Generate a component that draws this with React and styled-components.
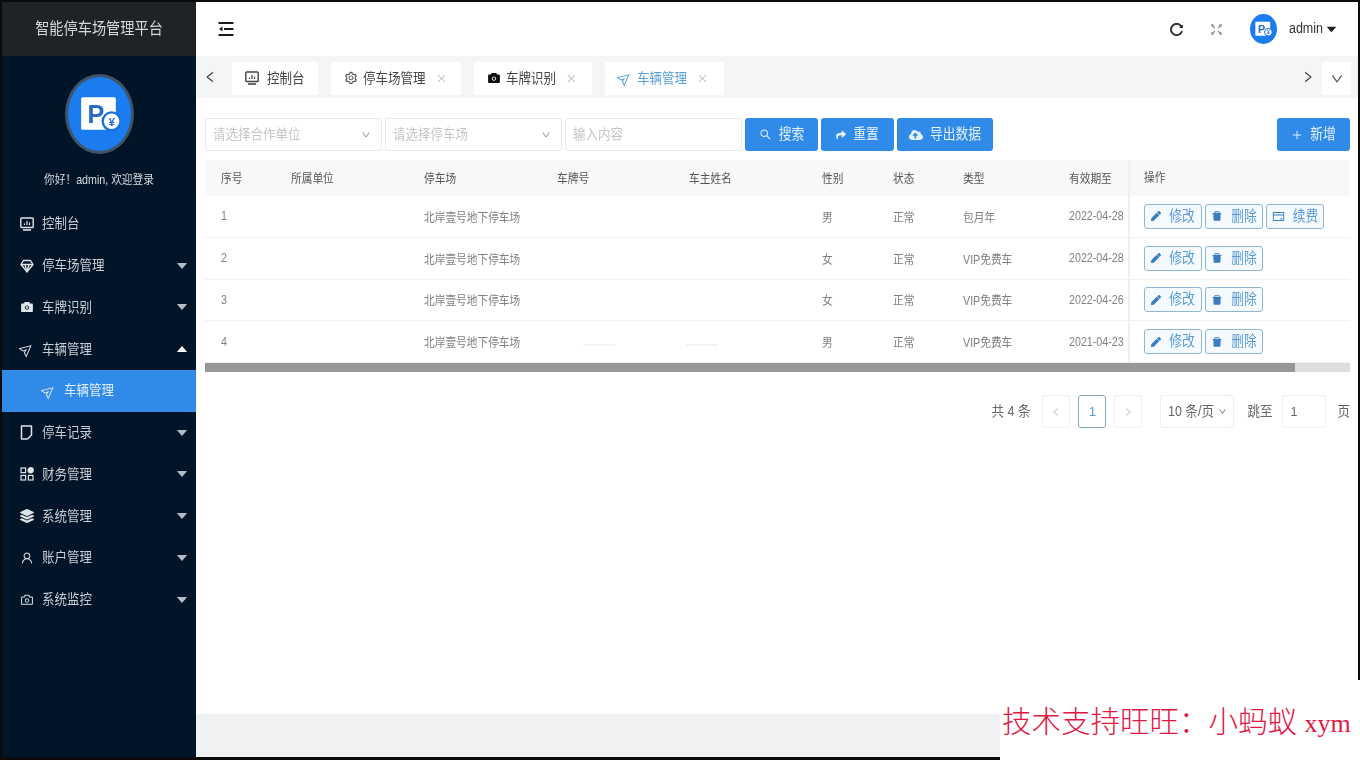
import React from 'react';
import styled, { createGlobalStyle, css } from 'styled-components';
import {
  AiOutlineSetting,
  AiFillCamera,
  AiOutlineSend,
  AiOutlineSearch,
  AiOutlinePlus,
  AiOutlineClose,
  AiOutlineLeft,
  AiOutlineRight,
  AiOutlineDown,
  AiOutlineReload,
  AiOutlineFullscreen,
  AiOutlineUser,
  AiOutlineCamera,
  AiOutlineCreditCard,
  AiFillDelete,
  AiFillCaretDown,
  AiFillCaretUp,
} from 'react-icons/ai';
import { FaShare, FaLayerGroup, FaPen, FaCloudUploadAlt } from 'react-icons/fa';

const FONT = `'Liberation Sans', 'Noto Sans CJK SC', sans-serif`;

// the screenshot is a stretched capture, glyphs are taller than they are wide
const tall = css`
  display: inline-block;
  transform: scaleY(1.12);
`;

const GlobalStyle = createGlobalStyle`
  html, body { margin: 0; padding: 0; background: #fff; }
  body { font-family: ${FONT}; overflow: hidden; }
  * { box-sizing: border-box; }
`;

const Page = styled.div`
  position: relative;
  width: 1360px;
  height: 760px;
  padding: 2px 2px 3px 2px;
  background: #0a0a0a;
  display: flex;
  overflow: hidden;
`;

const Label = styled.span`
  display: inline-block;
  transform: translateY(-1.5px) scaleY(1.12);
`;

/* sidebar */
const Sidebar = styled.aside`
  width: 194px;
  flex-shrink: 0;
  background: #021428;
  display: flex;
  flex-direction: column;
  filter: blur(0.35px);
`;

const Brand = styled.div`
  height: 54px;
  background: #1f2226;
  color: #d9d9d9;
  font-size: 14.2px;
  display: flex;
  align-items: center;
  justify-content: center;
`;

const Profile = styled.div`
  height: 147px;
  padding-top: 18px;
  display: flex;
  flex-direction: column;
  align-items: center;
`;

const AvatarRing = styled.div`
  width: 69px;
  height: 80px;
  display: flex;
  align-items: center;
  justify-content: center;
  border-radius: 50%;
  background: #1b7cf0;
  border: 3px solid #3f5468;
`;

const Welcome = styled.div`
  ${tall}
  margin-top: 17px;
  font-size: 10.7px;
  color: #d6dade;
`;

const MenuRow = styled.div`
  height: 41.75px;
  display: flex;
  align-items: center;
  padding: 0 7px 0 ${({ $sub }) => ($sub ? '39px' : '17px')};
  gap: 8px;
  font-size: 12.5px;
  color: ${({ $active }) => ($active ? '#dfeeff' : '#c9ced4')};
  background: ${({ $active }) => ($active ? '#2f8ae8' : 'transparent')};
`;

const MenuIcon = styled.span`
  width: 15px;
  display: flex;
  align-items: center;
  justify-content: center;
  font-size: 14px;
  color: #dfe3e7;
`;

const MenuLabel = styled(Label)`
  flex: 1;
`;

const Caret = styled.span`
  display: flex;
  font-size: 14px;
  color: ${({ $open }) => ($open ? '#fff' : '#b4bcc6')};
`;

const PlaneIcon = styled(AiOutlineSend)`
  transform: rotate(-40deg);
`;

/* main column */
const Main = styled.main`
  flex: 1;
  min-width: 0;
  background: #fff;
  display: flex;
  flex-direction: column;
  filter: blur(0.35px);
`;

const TopBar = styled.header`
  height: 54px;
  display: flex;
  align-items: center;
  padding: 0 20px 0 22px;
`;

const TopRight = styled.div`
  margin-left: auto;
  display: flex;
  align-items: center;
`;

const ReloadIcon = styled(AiOutlineReload)`
  font-size: 15px;
  color: #1a1a1a;
  stroke: #1a1a1a;
  stroke-width: 50;
`;

const ExpandIcon = styled(AiOutlineFullscreen)`
  font-size: 15px;
  color: #777;
  margin-left: 25px;
`;

const UserCircle = styled.div`
  width: 27px;
  height: 30px;
  margin-left: 26px;
  border-radius: 50%;
  background: #1b7cf0;
  display: flex;
  align-items: center;
  justify-content: center;
`;

const UserName = styled.span`
  ${tall}
  margin-left: 12px;
  font-size: 12.5px;
  color: #333;
`;

const UserCaret = styled(AiFillCaretDown)`
  font-size: 13px;
  color: #222;
  margin-left: 2px;
`;

const TabBar = styled.div`
  height: 42px;
  background: #f4f5f7;
  display: flex;
  align-items: flex-start;
  padding: 6px 0 0 0;
`;

const TabArrow = styled.span`
  width: ${({ $w }) => $w};
  height: 30px;
  padding-right: ${({ $pr }) => $pr || '0'};
  display: flex;
  align-items: center;
  justify-content: center;
  font-size: 14px;
  color: #333;
  flex-shrink: 0;
`;

const Tab = styled.div`
  height: 33px;
  width: ${({ $w }) => $w};
  margin-right: 13px;
  background: #fff;
  display: flex;
  align-items: center;
  padding: 0 0 1px 13px;
  font-size: 12.5px;
  gap: ${({ $gap }) => $gap || '5px'};
  color: ${({ $active }) => ($active ? '#5aa0d8' : '#444')};
  flex-shrink: 0;
`;

const TabIcon = styled.span`
  display: flex;
  font-size: 14px;
  color: ${({ $color }) => $color || 'inherit'};
`;

const TabClose = styled(AiOutlineClose)`
  font-size: 11px;
  color: #b9b9b9;
  margin-left: 5px;
`;

const TabSpacer = styled.div`
  flex: 1;
`;

const TabMenu = styled.div`
  width: 29px;
  height: 33px;
  margin-right: 7px;
  background: #fff;
  display: flex;
  align-items: center;
  justify-content: center;
  font-size: 14px;
  color: #444;
`;

const Content = styled.div`
  flex: 1;
  padding: 20px 8px 0 9px;
`;

const Filters = styled.div`
  height: 33px;
  display: flex;
  align-items: stretch;
`;

const Field = styled.div`
  width: 177px;
  margin-right: 3px;
  border: 1px solid #e8eaed;
  border-radius: 3px;
  display: flex;
  align-items: center;
  justify-content: space-between;
  padding: 0 10px 0 7px;
  font-size: 12.5px;
  color: #c4c6ca;
`;

const FieldArrow = styled(AiOutlineDown)`
  font-size: 10px;
  color: #777;
`;

const Btn = styled.div`
  height: 33px;
  width: ${({ $w }) => $w};
  margin-right: 3px;
  background: #2f8ae8;
  color: #e6f1fc;
  border-radius: 3px;
  display: flex;
  align-items: center;
  justify-content: center;
  gap: 7px;
  font-size: 12.8px;
  flex-shrink: 0;
`;

const AddBtn = styled(Btn)`
  margin-left: auto;
  margin-right: 0;
`;

const COLUMNS = '70px 133px 133px 132px 133px 71px 70px 106px 75px 1fr';

const HeadRow = styled.div`
  margin-top: 9px;
  height: 36px;
  display: grid;
  grid-template-columns: ${COLUMNS};
  align-items: center;
  background: #f7f8fa;
  font-size: 10.7px;
  color: #555;
`;

const Row = styled.div`
  height: 41.75px;
  display: grid;
  grid-template-columns: ${COLUMNS};
  align-items: center;
  border-bottom: 1px solid #f0f1f3;
  font-size: 10.7px;
  color: #808080;
`;

const Cell = styled.div`
  ${tall}
  padding-left: 16px;
  white-space: nowrap;
`;

const HeadCell = styled(Cell)`
  transform: translateY(-1px) scaleY(1.12);
`;

const ActionCell = styled.div`
  height: 100%;
  padding-left: 14px;
  display: flex;
  align-items: center;
  gap: 3px;
  border-left: 2px solid #eef0f2;
`;

const ActionBtn = styled.div`
  height: 25px;
  width: 58px;
  border: 1px solid #8fb6d2;
  border-radius: 3px;
  background: #f5fafe;
  color: #5a9bd5;
  font-size: 12.8px;
  display: flex;
  align-items: center;
  justify-content: center;
  gap: 8px;
`;

const ActionIcon = styled.span`
  display: flex;
  font-size: ${({ $size }) => $size || '12px'};
  color: #3a7cc0;
`;

const Redacted = styled.span`
  display: block;
  width: 32px;
  height: 1px;
  margin: 6px 0 0 ${({ $x }) => $x};
  background: #ececec;
`;

const ScrollTrack = styled.div`
  height: 9px;
  background: #dedede;
`;

const ScrollThumb = styled.div`
  width: 1090px;
  height: 100%;
  background: #979797;
`;

const Pager = styled.div`
  margin-top: 23px;
  height: 33px;
  display: flex;
  align-items: center;
  justify-content: flex-end;
  font-size: 12.5px;
  color: #666;
`;

const PageBox = styled.div`
  width: ${({ $w }) => $w || '28px'};
  height: 33px;
  margin-left: ${({ $ml }) => $ml || '7px'};
  border: 1px solid ${({ $on }) => ($on ? '#7fa9bd' : '#eeeff1')};
  border-radius: 3px;
  display: flex;
  align-items: center;
  justify-content: ${({ $start }) => ($start ? 'flex-start' : 'center')};
  padding-left: ${({ $start }) => ($start ? '7px' : '0')};
  gap: 4px;
  color: ${({ $on, $muted }) => ($on ? '#4f9ad6' : $muted ? '#bbb' : '#666')};
  font-size: ${({ $small }) => ($small ? '10px' : '12.5px')};
`;

const PagerText = styled(Label)`
  margin-left: ${({ $ml }) => $ml || '0'};
`;

const Footer = styled.footer`
  height: 43px;
  background: #f0f1f3;
`;

/* the pasted seller note over the bottom right corner */
const Watermark = styled.div`
  position: absolute;
  right: 0;
  bottom: 0;
  width: 360px;
  height: 80px;
  background: #fff;
  color: #e2173f;
  font-family: 'Liberation Serif', 'Noto Sans CJK SC', serif;
  font-size: 29.5px;
  font-weight: 300;
  padding: 26px 0 0 2px;
  white-space: nowrap;
  line-height: 32px;
`;

const WatermarkLatin = styled.span`
  font-size: 26px;
`;

const LogoMark = ({ size }) => (
  <svg width={size} height={size} viewBox="0 0 40 40">
    <rect x="3" y="4" width="33" height="31" rx="1.5" fill="#fff" />
    <text x="9" y="29" fontFamily="Liberation Sans, sans-serif" fontSize="24" fontWeight="700" fill="#2a6cc0">P</text>
    <circle cx="32" cy="27" r="8.5" fill="#fff" stroke="#1b6fd8" strokeWidth="2.2" />
    <text x="32" y="31" textAnchor="middle" fontFamily="Liberation Sans, sans-serif" fontSize="11" fontWeight="700" fill="#1b6fd8">¥</text>
  </svg>
);

const FoldIcon = () => (
  <svg width="16" height="16" viewBox="0 0 16 16">
    <rect x="0.5" y="1" width="15" height="2" fill="#1a1a1a" />
    <rect x="6" y="7" width="9.5" height="2" fill="#1a1a1a" />
    <rect x="0.5" y="13" width="15" height="2" fill="#1a1a1a" />
    <path d="M4.5 5.5v5L1 8z" fill="#1a1a1a" />
  </svg>
);

const ScreenIcon = ({ color = 'currentColor' }) => (
  <svg width="14" height="14" viewBox="0 0 14 14" fill="none" stroke={color} strokeWidth="1.4">
    <rect x="0.8" y="1" width="12.4" height="9.5" rx="0.8" />
    <path d="M4.5 8V6.5M7 8V4M9.5 8V5.5" strokeWidth="1.2" />
    <path d="M3 13h8" strokeWidth="1.6" />
  </svg>
);

const DiamondIcon = () => (
  <svg width="14" height="14" viewBox="0 0 14 14" fill="none" stroke="#dfe3e7" strokeWidth="1.4" strokeLinejoin="round">
    <path d="M3.5 1.5h7L13 5.5 7 12.8 1 5.5z" />
    <path d="M1 5.5h12M5 5.5L7 12.8 9 5.5" />
  </svg>
);

const RecordIcon = () => (
  <svg width="13" height="15" viewBox="0 0 13 15" fill="none" stroke="#dfe3e7" strokeWidth="1.5" strokeLinejoin="round">
    <path d="M1.5 1h10v9l-4 4h-6z" />
  </svg>
);

const FinanceIcon = () => (
  <svg width="14" height="14" viewBox="0 0 14 14" fill="none" stroke="#dfe3e7" strokeWidth="1.2">
    <rect x="1" y="1" width="4.6" height="4.6" />
    <rect x="1" y="8.4" width="4.6" height="4.6" />
    <rect x="8.4" y="8.4" width="4.6" height="4.6" />
    <circle cx="10.7" cy="3.3" r="2.6" fill="#dfe3e7" />
  </svg>
);

const MENU = [
  { label: '控制台', icon: <ScreenIcon /> },
  { label: '停车场管理', icon: <DiamondIcon />, caret: 'down' },
  { label: '车牌识别', icon: <AiFillCamera />, caret: 'down' },
  { label: '车辆管理', icon: <PlaneIcon />, caret: 'up' },
  { label: '车辆管理', icon: <PlaneIcon />, sub: true },
  { label: '停车记录', icon: <RecordIcon />, caret: 'down' },
  { label: '财务管理', icon: <FinanceIcon />, caret: 'down' },
  { label: '系统管理', icon: <FaLayerGroup />, caret: 'down' },
  { label: '账户管理', icon: <AiOutlineUser />, caret: 'down' },
  { label: '系统监控', icon: <AiOutlineCamera />, caret: 'down' },
];

const ROWS = [
  { id: 1, sex: '男', type: '包月年', date: '2022-04-28', renew: true },
  { id: 2, sex: '女', type: 'VIP免费车', date: '2022-04-28' },
  { id: 3, sex: '女', type: 'VIP免费车', date: '2022-04-26' },
  { id: 4, sex: '男', type: 'VIP免费车', date: '2021-04-23', blurred: true },
];

const HEADS = ['序号', '所属单位', '停车场', '车牌号', '车主姓名', '性别', '状态', '类型', '有效期至'];

const App = () => (
  <Page>
    <GlobalStyle />
    <Sidebar>
      <Brand><Label>智能停车场管理平台</Label></Brand>
      <Profile>
        <AvatarRing>
          <LogoMark size={42} />
        </AvatarRing>
        <Welcome>你好！admin, 欢迎登录</Welcome>
      </Profile>
      {MENU.map((item, i) => (
        <MenuRow key={i} $sub={item.sub} $active={item.sub}>
          <MenuIcon>{item.icon}</MenuIcon>
          <MenuLabel>{item.label}</MenuLabel>
          {item.caret && (
            <Caret $open={item.caret === 'up'}>
              {item.caret === 'up' ? <AiFillCaretUp /> : <AiFillCaretDown />}
            </Caret>
          )}
        </MenuRow>
      ))}
    </Sidebar>
    <Main>
      <TopBar>
        <FoldIcon />
        <TopRight>
          <ReloadIcon />
          <ExpandIcon />
          <UserCircle>
            <LogoMark size={18} />
          </UserCircle>
          <UserName>admin</UserName>
          <UserCaret />
        </TopRight>
      </TopBar>
      <TabBar>
        <TabArrow $w="36px" $pr="8px"><AiOutlineLeft /></TabArrow>
        <Tab $w="86px" $gap="8px"><TabIcon><ScreenIcon /></TabIcon><Label>控制台</Label></Tab>
        <Tab $w="130px"><TabIcon><AiOutlineSetting /></TabIcon><Label>停车场管理</Label><TabClose /></Tab>
        <Tab $w="118px"><TabIcon $color="#111"><AiFillCamera /></TabIcon><Label>车牌识别</Label><TabClose /></Tab>
        <Tab $w="119px" $active><TabIcon><PlaneIcon /></TabIcon><Label>车辆管理</Label><TabClose /></Tab>
        <TabSpacer />
        <TabArrow $w="28px"><AiOutlineRight /></TabArrow>
        <TabMenu><AiOutlineDown /></TabMenu>
      </TabBar>
      <Content>
        <Filters>
          <Field><Label>请选择合作单位</Label><FieldArrow /></Field>
          <Field><Label>请选择停车场</Label><FieldArrow /></Field>
          <Field><Label>输入内容</Label></Field>
          <Btn $w="73px"><AiOutlineSearch size={13} /><Label>搜索</Label></Btn>
          <Btn $w="73px"><FaShare size={10} /><Label>重置</Label></Btn>
          <Btn $w="96px"><FaCloudUploadAlt size={14} /><Label>导出数据</Label></Btn>
          <AddBtn $w="73px"><AiOutlinePlus size={12} /><Label>新增</Label></AddBtn>
        </Filters>
        <HeadRow>
          {HEADS.map((h) => <HeadCell key={h}>{h}</HeadCell>)}
          <ActionCell><Label>操作</Label></ActionCell>
        </HeadRow>
        {ROWS.map((r) => (
          <Row key={r.id}>
            <Cell>{r.id}</Cell>
            <Cell />
            <Cell>北岸壹号地下停车场</Cell>
            <Cell>{r.blurred && <Redacted $x="26px" />}</Cell>
            <Cell>{r.blurred && <Redacted $x="-3px" />}</Cell>
            <Cell>{r.sex}</Cell>
            <Cell>正常</Cell>
            <Cell>{r.type}</Cell>
            <Cell>{r.date}</Cell>
            <ActionCell>
              <ActionBtn><ActionIcon $size="10px"><FaPen /></ActionIcon><Label>修改</Label></ActionBtn>
              <ActionBtn><ActionIcon><AiFillDelete /></ActionIcon><Label>删除</Label></ActionBtn>
              {r.renew && <ActionBtn><ActionIcon $size="13px"><AiOutlineCreditCard /></ActionIcon><Label>续费</Label></ActionBtn>}
            </ActionCell>
          </Row>
        ))}
        <ScrollTrack><ScrollThumb /></ScrollTrack>
        <Pager>
          <PagerText>共 4 条</PagerText>
          <PageBox $ml="12px" $muted $small><AiOutlineLeft /></PageBox>
          <PageBox $ml="8px" $on>1</PageBox>
          <PageBox $ml="8px" $muted $small><AiOutlineRight /></PageBox>
          <PageBox $w="74px" $ml="18px"><Label>10 条/页</Label><AiOutlineDown size={9} /></PageBox>
          <PagerText $ml="13px">跳至</PagerText>
          <PageBox $w="44px" $ml="10px" $start>1</PageBox>
          <PagerText $ml="11px">页</PagerText>
        </Pager>
      </Content>
      <Footer />
    </Main>
    <Watermark>技术支持旺旺：小蚂蚁 <WatermarkLatin>xym</WatermarkLatin></Watermark>
  </Page>
);

export default App;
